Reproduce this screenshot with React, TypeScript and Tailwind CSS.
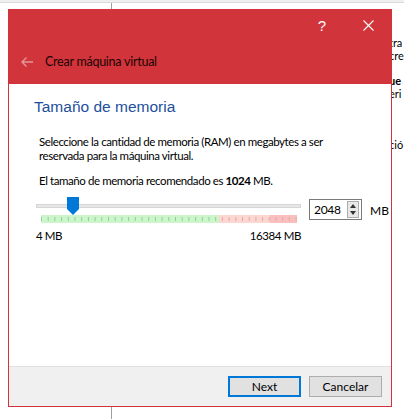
import React from "react";

const font = { fontFamily: 'Lato, "Liberation Sans", Arial, sans-serif' };
const headFont = { fontFamily: '"Liberation Sans", Arial, sans-serif' };

function Ticks() {
  const ticks = [];
  for (let i = 0; i < 39; i++) {
    const x = 0.5 + i * 6.7;
    ticks.push(<line key={i} x1={x} x2={x} y1={2} y2={6} stroke={x < 178 ? "#8fd08f" : "#e8a6a0"} strokeWidth={1} />);
  }
  return (
    <svg width="256" height="8" viewBox="0 0 256 8" className="block">
      <rect x="0" y="0" width="178" height="8" fill="#ccf5cc" />
      <rect x="178" y="0" width="51" height="8" fill="#fcd6d0" />
      <rect x="229" y="0" width="27" height="8" fill="#f8bfbf" />
      {ticks}
    </svg>
  );
}

export default function App() {
  return (
    <div className="relative w-[404px] h-[419px] overflow-hidden bg-white" style={font}>
      {/* desktop background */}
      <div className="h-[3px] bg-[#f0f0f0] border-b border-[#dadada]" />
      <div className="absolute left-[111px] top-[3px] w-px h-[416px] bg-[#a0a0a0]" />
      <div className="absolute left-[112px] top-[3px] right-0 bottom-0 bg-white" />
      <div className="absolute left-[389px] top-[36px] w-[15px] overflow-hidden text-[11px] leading-[13px] text-black whitespace-nowrap">
        <div>tra</div>
        <div>cre</div>
        <div className="mt-[12px] font-bold">ue</div>
        <div>eri</div>
        <div className="mt-[38px]">ció</div>
      </div>

      {/* dialog window */}
      <div className="absolute left-[8px] top-[9px] w-[384px] h-[398px] flex flex-col border border-[#d1343a] bg-white">
        <div className="bg-[#d1343a] flex flex-col">
          <div className="h-[30px] flex items-center justify-end text-white">
            <span className="w-[46px] text-center text-[15px] font-light leading-none" style={headFont}>?</span>
            <span className="w-[46px] flex justify-center">
              <svg width="11" height="11" viewBox="0 0 11 11">
                <path d="M0.5 0.5 L10.5 10.5 M10.5 0.5 L0.5 10.5" stroke="white" strokeWidth="1.1" />
              </svg>
            </span>
          </div>
          <div className="h-[44px] flex items-center">
            <span className="w-[36px] flex justify-center">
              <svg width="14" height="12" viewBox="0 0 14 12">
                <path d="M13 6 H2 M6.5 1.5 L2 6 L6.5 10.5" stroke="#e3979a" strokeWidth="1.4" fill="none" />
              </svg>
            </span>
            <span className="text-[12.5px] tracking-[-0.25px] text-[#1a0505]">Crear máquina virtual</span>
          </div>
        </div>

        <div className="flex-1 flex flex-col pl-[25px] pt-[13px]">
          <div className="text-[15.5px] leading-[20px] text-[#1d4f9c]" style={headFont}>Tamaño de memoria</div>
          <div className="pl-[5px] mt-[18px] text-[11.5px] tracking-[-0.42px] leading-[14px] text-black">
            <div>Seleccione la cantidad de memoria (RAM) en megabytes a ser</div>
            <div>reservada para la máquina virtual.</div>
            <div className="mt-[11px]">
              El tamaño de memoria recomendado es <b>1024</b> MB.
            </div>
          </div>

          <div className="flex items-start mt-[9px] pl-[2px]">
            <div className="relative w-[265px]">
              <div className="pt-[7px]">
                <div className="h-[4px] bg-[#e7e7e7] border border-[#d6d6d6]" />
              </div>
              <div className="ml-[5px] mt-[7px]">
                <Ticks />
              </div>
              <svg className="absolute left-[31px] top-0" width="12" height="18" viewBox="0 0 12 18">
                <path d="M0 0 H12 V12 L6 18 L0 12 Z" fill="#0078d7" />
              </svg>
            </div>
            <div className="ml-[8px] mt-[2px] w-[53px] h-[21px] border border-[#7a7a7a] bg-white flex items-center justify-between pl-[4px] pr-[2px]">
              <span className="text-[12px] tracking-[-0.3px] text-black">2048</span>
              <div className="w-[12px] h-[17px] border border-[#adadad] bg-[#e8e8e8] flex flex-col items-center justify-around">
                <svg width="6" height="4" viewBox="0 0 6 4"><path d="M0 4 L3 0 L6 4 Z" fill="#333" /></svg>
                <svg width="6" height="4" viewBox="0 0 6 4"><path d="M0 0 L3 4 L6 0 Z" fill="#333" /></svg>
              </div>
            </div>
            <span className="ml-[8px] mt-[5px] text-[12px] text-black">MB</span>
          </div>

          <div className="w-[267px] pl-[2px] flex justify-between mt-[6px] text-[11.5px] tracking-[-0.4px] leading-[14px] text-black">
            <span>4 MB</span>
            <span>16384 MB</span>
          </div>
        </div>

        <div className="h-[40px] bg-[#f0f0f0] border-t border-[#dfdfdf] flex items-start justify-end gap-[8px] pt-[9px] pr-[9px]">
          <button className="w-[73px] h-[21px] border-2 border-[#0078d7] bg-[#e1e1e1] text-[12px] text-black leading-none">
            Next
          </button>
          <button className="w-[73px] h-[21px] border border-[#adadad] bg-[#e1e1e1] text-[12px] text-black leading-none">
            Cancelar
          </button>
        </div>
      </div>
    </div>
  );
}
